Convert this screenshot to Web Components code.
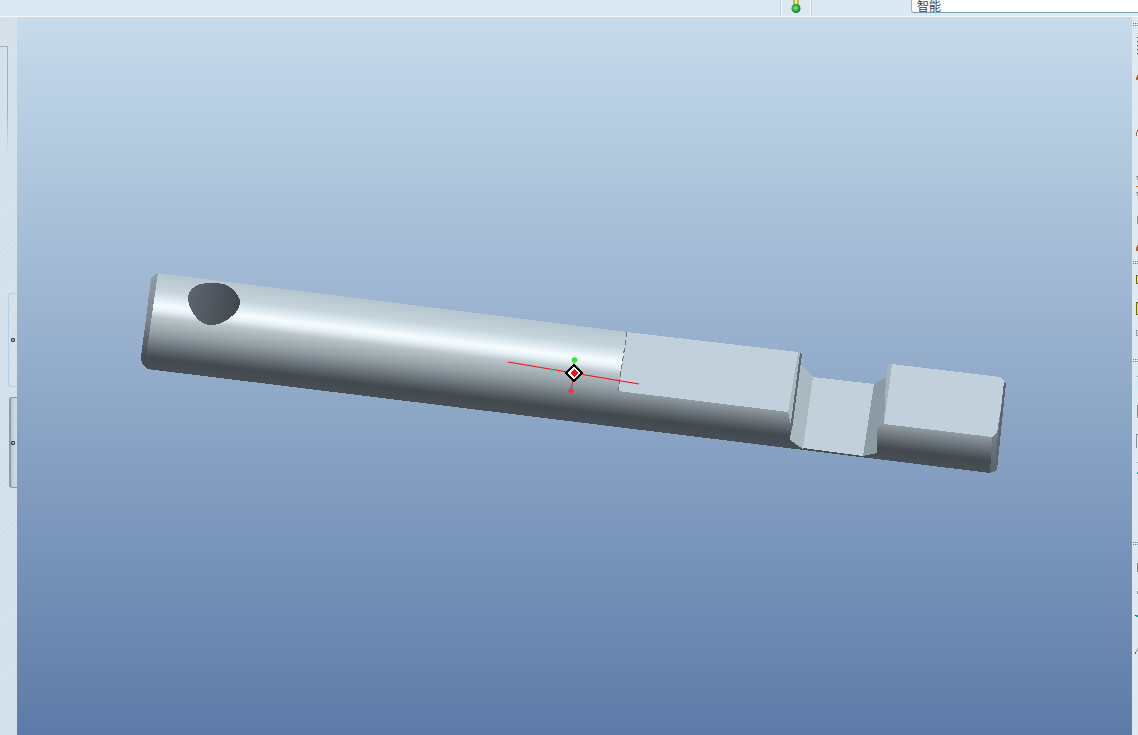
<!DOCTYPE html>
<html lang="zh">
<head>
<meta charset="utf-8">
<title>Part viewer</title>
<style>
html, body { margin: 0; height: 100%; overflow: hidden; background: #dde9f2; }
</style>
</head>
<body>
<cad-app>
  <cad-topbar slot="top" mode="智能"></cad-topbar>
  <cad-siderail slot="left"></cad-siderail>
  <cad-viewport slot="main"></cad-viewport>
  <cad-toolrail slot="right"></cad-toolrail>
</cad-app>
<script>
const appTemplate = document.createElement("template");
appTemplate.innerHTML = `
<style>
:host {
  display: grid;
  grid-template-columns: 17px 1115px 6px;
  grid-template-rows: 17px 718px;
  width: 1138px;
  height: 735px;
  overflow: hidden;
}
.top { grid-column: 1 / 4; display: block; }
</style>
<slot name="top" class="top"></slot>
<slot name="left"></slot>
<slot name="main"></slot>
<slot name="right"></slot>`;

class CadApp extends HTMLElement {
  constructor() {
    super();
    this.attachShadow({ mode: "open" });
    this.shadowRoot.appendChild(appTemplate.content.cloneNode(true));
  }
}
customElements.define("cad-app", CadApp);

const topbarTemplate = document.createElement("template");
topbarTemplate.innerHTML = `
<style>
:host {
  display: flex;
  height: 16px;
  background: #dde9f2;
  border-bottom: 1px solid #f4f8fb;
  overflow: hidden;
}
.spacer { width: 780px; flex: none; }
.status {
  width: 30px;
  flex: none;
  display: flex;
  justify-content: center;
  border-left: 1px solid #c6d3dc;
  border-right: 1px solid #c6d3dc;
  box-shadow: inset 1px 0 0 #f0f6fa, inset -1px 0 0 #f0f6fa;
}
.gap { width: 99px; flex: none; }
.filter {
  flex: 1;
  height: 13px;
  box-sizing: border-box;
  background: #fff;
  border-left: 1px solid #9db4c2;
  border-bottom: 1px solid #7d9cac;
  border-bottom-left-radius: 3px;
  padding-left: 5px;
  font: 12px/10px "Noto Sans CJK SC", "Liberation Sans", sans-serif;
  color: #3c3c3c;
  display: flex;
  align-items: flex-end;
  overflow: hidden;
}
.filter span { display: block; margin-bottom: 1px; }
</style>
<div class="spacer"></div>
<div class="status">
  <svg width="12" height="15" viewBox="0 0 12 15">
    <defs>
      <radialGradient id="ball" cx="0.45" cy="0.45" r="0.6">
        <stop offset="0" stop-color="#8fe88f"/>
        <stop offset="0.55" stop-color="#2fb040"/>
        <stop offset="1" stop-color="#0f5a1c"/>
      </radialGradient>
    </defs>
    <rect x="3.5" y="0" width="5" height="5" fill="#8a8a30"/>
    <rect x="4.5" y="0" width="3" height="5" fill="#f4f44c"/>
    <circle cx="6" cy="8.5" r="4.5" fill="url(#ball)"/>
  </svg>
</div>
<div class="gap"></div>
<div class="filter"><span></span></div>`;

class CadTopbar extends HTMLElement {
  constructor() {
    super();
    this.attachShadow({ mode: "open" });
    this.shadowRoot.appendChild(topbarTemplate.content.cloneNode(true));
    this.shadowRoot.querySelector(".filter span").textContent = this.getAttribute("mode");
  }
}
customElements.define("cad-topbar", CadTopbar);

const siderailTemplate = document.createElement("template");
siderailTemplate.innerHTML = `
<style>
:host {
  display: flex;
  flex-direction: column;
  align-items: flex-end;
  height: 718px;
  box-sizing: border-box;
  padding-top: 29px;
  overflow: hidden;
  background: repeating-linear-gradient(135deg, #d6e3ec 0 2px, #d3e0e9 2px 4px);
}
.panel {
  width: 8px;
  height: 106px;
  margin-right: 9px;
  box-sizing: border-box;
  border-top: 1px solid #a9b3b9;
  border-right: 1px solid #a9b3b9;
  border-image: linear-gradient(#a3aeb5 60%, #d3e0e9) 1;
}
.tab {
  box-sizing: border-box;
  display: flex;
  align-items: center;
  justify-content: flex-end;
  padding-right: 2px;
}
.tab i {
  width: 4px;
  height: 4px;
  box-sizing: border-box;
  border: 1px solid #2e3a44;
  border-radius: 1px;
  background: #9fb2bf;
}
.light {
  width: 9px;
  height: 94px;
  margin-top: 141px;
  background: transparent;
  border: 1px solid #b4d0e6;
  border-right: 0;
  border-radius: 3px 0 0 3px;
}
.dark {
  width: 8px;
  height: 91px;
  margin-top: 10px;
  background: linear-gradient(90deg, #b8c6d0 0, #c4d3dd 40%, #d0dee7 100%);
  border: 1px solid #8f9aa1;
  border-left-width: 2px;
  border-right: 0;
  border-radius: 3px 0 0 3px;
}
</style>
<div class="panel"></div>
<div class="tab light"><i></i></div>
<div class="tab dark"><i></i></div>`;

class CadSiderail extends HTMLElement {
  constructor() {
    super();
    this.attachShadow({ mode: "open" });
    this.shadowRoot.appendChild(siderailTemplate.content.cloneNode(true));
  }
}
customElements.define("cad-siderail", CadSiderail);

// x, y, w, h, colour of the toolbar icons that the window edge cuts off (y is from page top)
const RAIL_MARKS = [
  [5, 37, 1, 1, "#333"], [5, 41, 1, 1, "#333"], [5, 45, 1, 1, "#333"], [5, 49, 1, 1, "#333"], [5, 53, 1, 1, "#333"],
  [5, 75, 1, 2, "#a0562a"], [4, 77, 2, 3, "#a8683c"],
  [5, 130, 1, 2, "#a0562a"], [4, 132, 1, 4, "#b0603a"],
  [4, 176, 2, 1, "#8d8d8d"], [5, 177, 1, 3, "#999"],
  [4, 186, 2, 1, "#d07a3a"],
  [4, 192, 2, 1, "#8d8d8d"], [5, 193, 1, 3, "#999"],
  [5, 216, 1, 8, "#8e9498"],
  [5, 245, 1, 2, "#a0562a"], [4, 247, 2, 4, "#a8683c"],
  [4, 275, 1, 9, "#6b6b10"], [5, 275, 1, 1, "#6b6b10"], [5, 283, 1, 1, "#6b6b10"], [5, 276, 1, 7, "#e8e860"],
  [4, 302, 1, 13, "#6b6b10"], [5, 302, 1, 1, "#6b6b10"], [5, 314, 1, 1, "#6b6b10"], [5, 303, 1, 11, "#e8e860"],
  [4, 330, 1, 6, "#9a9a9a"], [5, 330, 1, 1, "#9a9a9a"], [5, 335, 1, 1, "#9a9a9a"],
  [5, 376, 1, 1, "#777"], [5, 378, 1, 13, "#b8f4f4"],
  [5, 405, 1, 13, "#85898c"],
  [4, 434, 1, 14, "#8590a0"], [5, 434, 1, 1, "#8590a0"],
  [5, 462, 1, 1, "#999"], [5, 472, 1, 2, "#20a0a0"],
  [5, 563, 1, 9, "#85898c"],
  [5, 591, 1, 3, "#85898c"],
  [4, 615, 2, 2, "#20a0a0"], [3, 615, 1, 1, "#333"],
  [4, 650, 1, 2, "#aaa"], [5, 648, 1, 3, "#aaa"], [3, 652, 1, 2, "#555"],
];
const RAIL_GRIPS = [23, 261, 359, 542];

const toolrailTemplate = document.createElement("template");
toolrailTemplate.innerHTML = `
<style>
:host { display: block; height: 718px; background: #dee9f2; overflow: hidden; }
svg { display: block; }
</style>
<svg width="6" height="718" viewBox="0 17 6 718" shape-rendering="crispEdges"></svg>`;

class CadToolrail extends HTMLElement {
  constructor() {
    super();
    this.attachShadow({ mode: "open" });
    this.shadowRoot.appendChild(toolrailTemplate.content.cloneNode(true));
    let marks = "";
    RAIL_GRIPS.forEach((y) => {
      for (let x = 1; x < 6; x += 2) {
        marks += `<rect x="${x}" y="${y}" width="1" height="1" fill="#5d7f9c"/>`;
        marks += `<rect x="${x}" y="${y + 2}" width="1" height="1" fill="#5d7f9c"/>`;
      }
    });
    RAIL_MARKS.forEach(([x, y, w, h, c]) => {
      marks += `<rect x="${x}" y="${y}" width="${w}" height="${h}" fill="${c}"/>`;
    });
    this.shadowRoot.querySelector("svg").innerHTML = marks;
  }
}
customElements.define("cad-toolrail", CadToolrail);

const viewportTemplate = document.createElement("template");
viewportTemplate.innerHTML = `
<style>
:host {
  display: block;
  height: 718px;
  background: linear-gradient(#c6dbeb, #5d7ba8);
  overflow: hidden;
}
svg { display: block; }
</style>
<svg width="1115" height="718" viewBox="17 17 1115 718">
  <defs>
    <linearGradient id="shaft" gradientUnits="userSpaceOnUse" x1="300" y1="290.6" x2="288.2" y2="386.2">
      <stop offset="0" stop-color="#b6c4cd"/>
      <stop offset="0.18" stop-color="#c6d4dc"/>
      <stop offset="0.27" stop-color="#e2edf2"/>
      <stop offset="0.33" stop-color="#f6fdff"/>
      <stop offset="0.39" stop-color="#e4eef2"/>
      <stop offset="0.46" stop-color="#b9c4c9"/>
      <stop offset="0.62" stop-color="#949fa5"/>
      <stop offset="0.78" stop-color="#626b71"/>
      <stop offset="0.88" stop-color="#42494f"/>
      <stop offset="1" stop-color="#474e54"/>
    </linearGradient>
    <linearGradient id="bevel" gradientUnits="userSpaceOnUse" x1="300" y1="290.6" x2="288.2" y2="386.2">
      <stop offset="0" stop-color="#929da3"/>
      <stop offset="0.5" stop-color="#7b858b"/>
      <stop offset="0.88" stop-color="#41484e"/>
      <stop offset="1" stop-color="#474e54"/>
    </linearGradient>
    <linearGradient id="endcap" x1="0" y1="0" x2="0" y2="1">
      <stop offset="0" stop-color="#a5b2b9"/>
      <stop offset="0.45" stop-color="#7d878d"/>
      <stop offset="1" stop-color="#565e64"/>
    </linearGradient>
    <linearGradient id="hole" gradientUnits="userSpaceOnUse" x1="188" y1="300" x2="240" y2="306">
      <stop offset="0" stop-color="#5c646e"/>
      <stop offset="1" stop-color="#41484d"/>
    </linearGradient>
  </defs>
  <g shape-rendering="crispEdges">
    <polygon fill="url(#shaft)" points="158,273 627,332 618,391 788,412 792,430 877,429 884,424 992,437 990,473 147,369 142,363 146,357"/>
    <polygon fill="url(#bevel)" points="158,273 154,275 151,279 141,357 142,364 147,369 146,357"/>
    <path fill="url(#hole)" d="M188 297 Q190 287 200 284 Q212 282 224 284 Q236 289 240 300 Q240 310 232 316 Q222 325 212 325 Q202 325 196 317 Q188 308 188 297Z"/>

    <polygon fill="#c1d0da" points="627,332 798,352 788,412 618,391"/>
    <polygon fill="#aab8c0" points="798,352 802,354 792,430 788,412"/>
    <polygon fill="#aab8c0" points="801,364 813,377 803,449 790,440 792,420"/>
    <polygon fill="#c1d0da" points="813,377 874,384 863,456 803,448"/>
    <polygon fill="#8b9aa3" points="874,384 888,376 884,424 877,429 877,453 863,456"/>
    <polygon fill="#a5b3ba" points="888,364 892,364 884,424 886,376"/>
    <polygon fill="#c1d0da" points="892,364 1000,377 1005,382 997,433 992,437 884,424"/>
    <polygon fill="url(#endcap)" points="997,433 1005,382 996,470 990,473 992,437"/>
    <polygon fill="#5d666c" points="1004,382 1006,383 997,470 994,472"/>
    <polygon fill="#5d666c" points="800,353 802,354 792,430 790,430"/>
  </g>
  <line x1="627" y1="332" x2="618" y2="391" stroke="#6a7379" stroke-width="1" stroke-dasharray="5 3" shape-rendering="crispEdges"/>

  <line x1="508" y1="362" x2="639" y2="384" stroke="#f01010" stroke-width="1.2"/>
  <line x1="574" y1="360" x2="574" y2="373" stroke="#30c030"/>
  <line x1="574" y1="373" x2="571" y2="391" stroke="#d03030"/>
  <circle cx="552" cy="371" r="1.8" fill="#30e0e0"/>
  <circle cx="574.5" cy="360" r="2.8" fill="#30e830"/>
  <circle cx="571" cy="391" r="2.5" fill="#f03838"/>
  <polygon points="574,365 582,373 574,381 566,373" fill="#fff" stroke="#000" stroke-width="2" shape-rendering="crispEdges"/>
  <polygon points="574,369 578,373 574,377 570,373" fill="#f01010" shape-rendering="crispEdges"/>
</svg>`;

class CadViewport extends HTMLElement {
  constructor() {
    super();
    this.attachShadow({ mode: "open" });
    this.shadowRoot.appendChild(viewportTemplate.content.cloneNode(true));
  }
}
customElements.define("cad-viewport", CadViewport);
</script>
</body>
</html>
